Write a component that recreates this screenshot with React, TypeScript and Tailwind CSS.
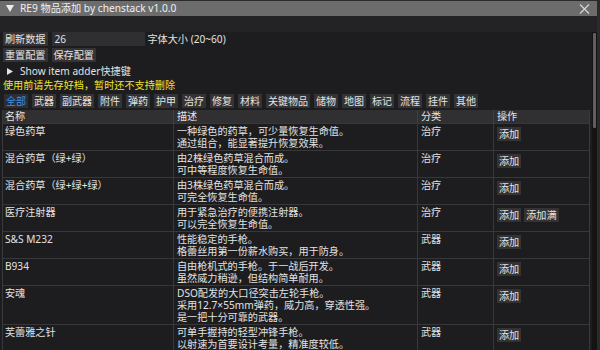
import React from "react";

type Item = {
  name: string;
  desc: string[];
  cat: string;
  full?: boolean;
};

const items: Item[] = [
  {
    name: "绿色药草",
    desc: ["一种绿色的药草，可少量恢复生命值。", "通过组合，能显著提升恢复效果。"],
    cat: "治疗",
  },
  {
    name: "混合药草（绿+绿）",
    desc: ["由2株绿色药草混合而成。", "可中等程度恢复生命值。"],
    cat: "治疗",
  },
  {
    name: "混合药草（绿+绿+绿）",
    desc: ["由3株绿色药草混合而成。", "可完全恢复生命值。"],
    cat: "治疗",
  },
  {
    name: "医疗注射器",
    desc: ["用于紧急治疗的便携注射器。", "可以完全恢复生命值。"],
    cat: "治疗",
    full: true,
  },
  {
    name: "S&S M232",
    desc: ["性能稳定的手枪。", "格蕾丝用第一份薪水购买，用于防身。"],
    cat: "武器",
  },
  {
    name: "B934",
    desc: ["自由枪机式的手枪。于一战后开发。", "虽然威力稍逊，但结构简单耐用。"],
    cat: "武器",
  },
  {
    name: "安魂",
    desc: [
      "DSO配发的大口径突击左轮手枪。",
      "采用12.7×55mm弹药，威力高，穿透性强。",
      "是一把十分可靠的武器。",
    ],
    cat: "武器",
  },
  {
    name: "芙蕾雅之针",
    desc: [
      "可单手握持的轻型冲锋手枪。",
      "以射速为首要设计考量，精准度较低。",
      "使用手枪弹药。",
    ],
    cat: "武器",
  },
];

const tabs = [
  "全部",
  "武器",
  "副武器",
  "附件",
  "弹药",
  "护甲",
  "治疗",
  "修复",
  "材料",
  "关键物品",
  "储物",
  "地图",
  "标记",
  "流程",
  "挂件",
  "其他",
];

function Btn({ children }: { children: React.ReactNode }) {
  return (
    <span className="h-[14px] px-[2px] bg-[#333336] text-[#e4e4e4] leading-[14px] whitespace-nowrap">
      {children}
    </span>
  );
}

export default function App() {
  return (
    <div
      className="w-[600px] h-[350px] overflow-hidden bg-[#2a2a2b] text-[10.15px] text-[#e2e2e2] flex flex-col"
      style={{ fontFamily: "'Noto Sans', 'Noto Sans CJK SC', sans-serif" }}
    >
      {/* Title bar */}
      <div className="mt-px mr-[3px] h-[15px] bg-[#6c6c6d] flex items-center pl-[6px] pr-[7px] shrink-0">
        <svg width="8" height="7" viewBox="0 0 8 7" className="mr-[6px]">
          <path d="M0 0 H8 L4 7 Z" fill="#ececec" />
        </svg>
        <span className="text-[#f0f0f0] text-[10.2px] leading-[15px]">
          RE9 物品添加 by chenstack v1.0.0
        </span>
        <svg width="11" height="10" viewBox="0 0 11 10" className="ml-auto">
          <path d="M1 0.5 L10 9.5 M10 0.5 L1 9.5" stroke="#d8d8d8" strokeWidth="1.1" />
        </svg>
      </div>

      {/* Window body */}
      <div className="flex-1 mr-[3px] bg-[#1d1d1f] flex flex-col min-h-0">
        <div className="h-[16px] bg-[#232325] shrink-0" />

        <div className="flex flex-1 min-h-0">
          <div className="flex-1 min-w-0 flex flex-col pl-[2px] pr-[2px]">
            {/* Controls */}
            <div className="flex items-center pl-px">
              <Btn>刷新数据</Btn>
              <span className="ml-[4px] w-[93px] h-[14px] bg-[#2f2f32] px-[3px] leading-[14px]">26</span>
              <span className="ml-[3px] leading-[14px]">字体大小 (20~60)</span>
            </div>
            <div className="flex items-center gap-[4px] pl-px mt-[2px]">
              <Btn>重置配置</Btn>
              <Btn>保存配置</Btn>
            </div>
            <div className="flex items-center h-[14px] mt-[2px] pl-[5px]">
              <svg width="6" height="7" viewBox="0 0 6 7" className="mr-[7px]">
                <path d="M0 0 L6 3.5 L0 7 Z" fill="#e2e2e2" />
              </svg>
              <span className="leading-[14px]">Show item adder快捷键</span>
            </div>
            <div className="h-[14px] leading-[14px] text-[#eee52f] pl-px">
              使用前请先存好档，暂时还不支持删除
            </div>

            {/* Tabs */}
            <div className="flex items-center gap-[4px] mt-[2px] pl-[2px] text-[10px]">
              {tabs.map((t, i) => (
                <span
                  key={t}
                  className={
                    i === 0
                      ? "h-[14px] px-[2px] bg-[#2c2e33] text-[#3d8ee0] leading-[14px]"
                      : "h-[14px] px-[2px] bg-[#333336] text-[#e4e4e4] leading-[14px]"
                  }
                >
                  {t}
                </span>
              ))}
            </div>

            {/* Table */}
            <div className="mt-[2px] border-l border-r border-[#3a3a3c] min-h-0">
              <div className="grid grid-cols-[171px_244px_76px_1fr] bg-[#303032] h-[13px] leading-[13px] text-[#e6e6e6]">
                <div className="pl-[2px] border-r border-[#3f3f41]">名称</div>
                <div className="pl-[3px] border-r border-[#3f3f41]">描述</div>
                <div className="pl-[3px] border-r border-[#3f3f41]">分类</div>
                <div className="pl-[3px]">操作</div>
              </div>
              {items.map((it) => (
                <div
                  key={it.name}
                  className="grid grid-cols-[171px_244px_76px_1fr] border-t border-[#38383a] leading-[12px]"
                >
                  <div className="pl-[2px] pt-px pb-px border-r border-[#38383a]">{it.name}</div>
                  <div className="pl-[3px] pt-px pb-px border-r border-[#38383a] whitespace-nowrap">
                    {it.desc.map((d, i) => (
                      <React.Fragment key={d}>
                        {i > 0 && <br />}
                        {d}
                      </React.Fragment>
                    ))}
                  </div>
                  <div className="pl-[3px] pt-px pb-px border-r border-[#38383a]">{it.cat}</div>
                  <div className="pl-[3px] pt-[3px] flex items-start gap-[3px]">
                    <Btn>添加</Btn>
                    {it.full && <Btn>添加满</Btn>}
                  </div>
                </div>
              ))}
            </div>
          </div>

          {/* Scrollbar */}
          <div className="w-[5px] bg-[#141415] pt-px shrink-0">
            <div className="h-[95px] mx-px bg-[#5f5f61] rounded-[1px]" />
          </div>
        </div>
      </div>
    </div>
  );
}
